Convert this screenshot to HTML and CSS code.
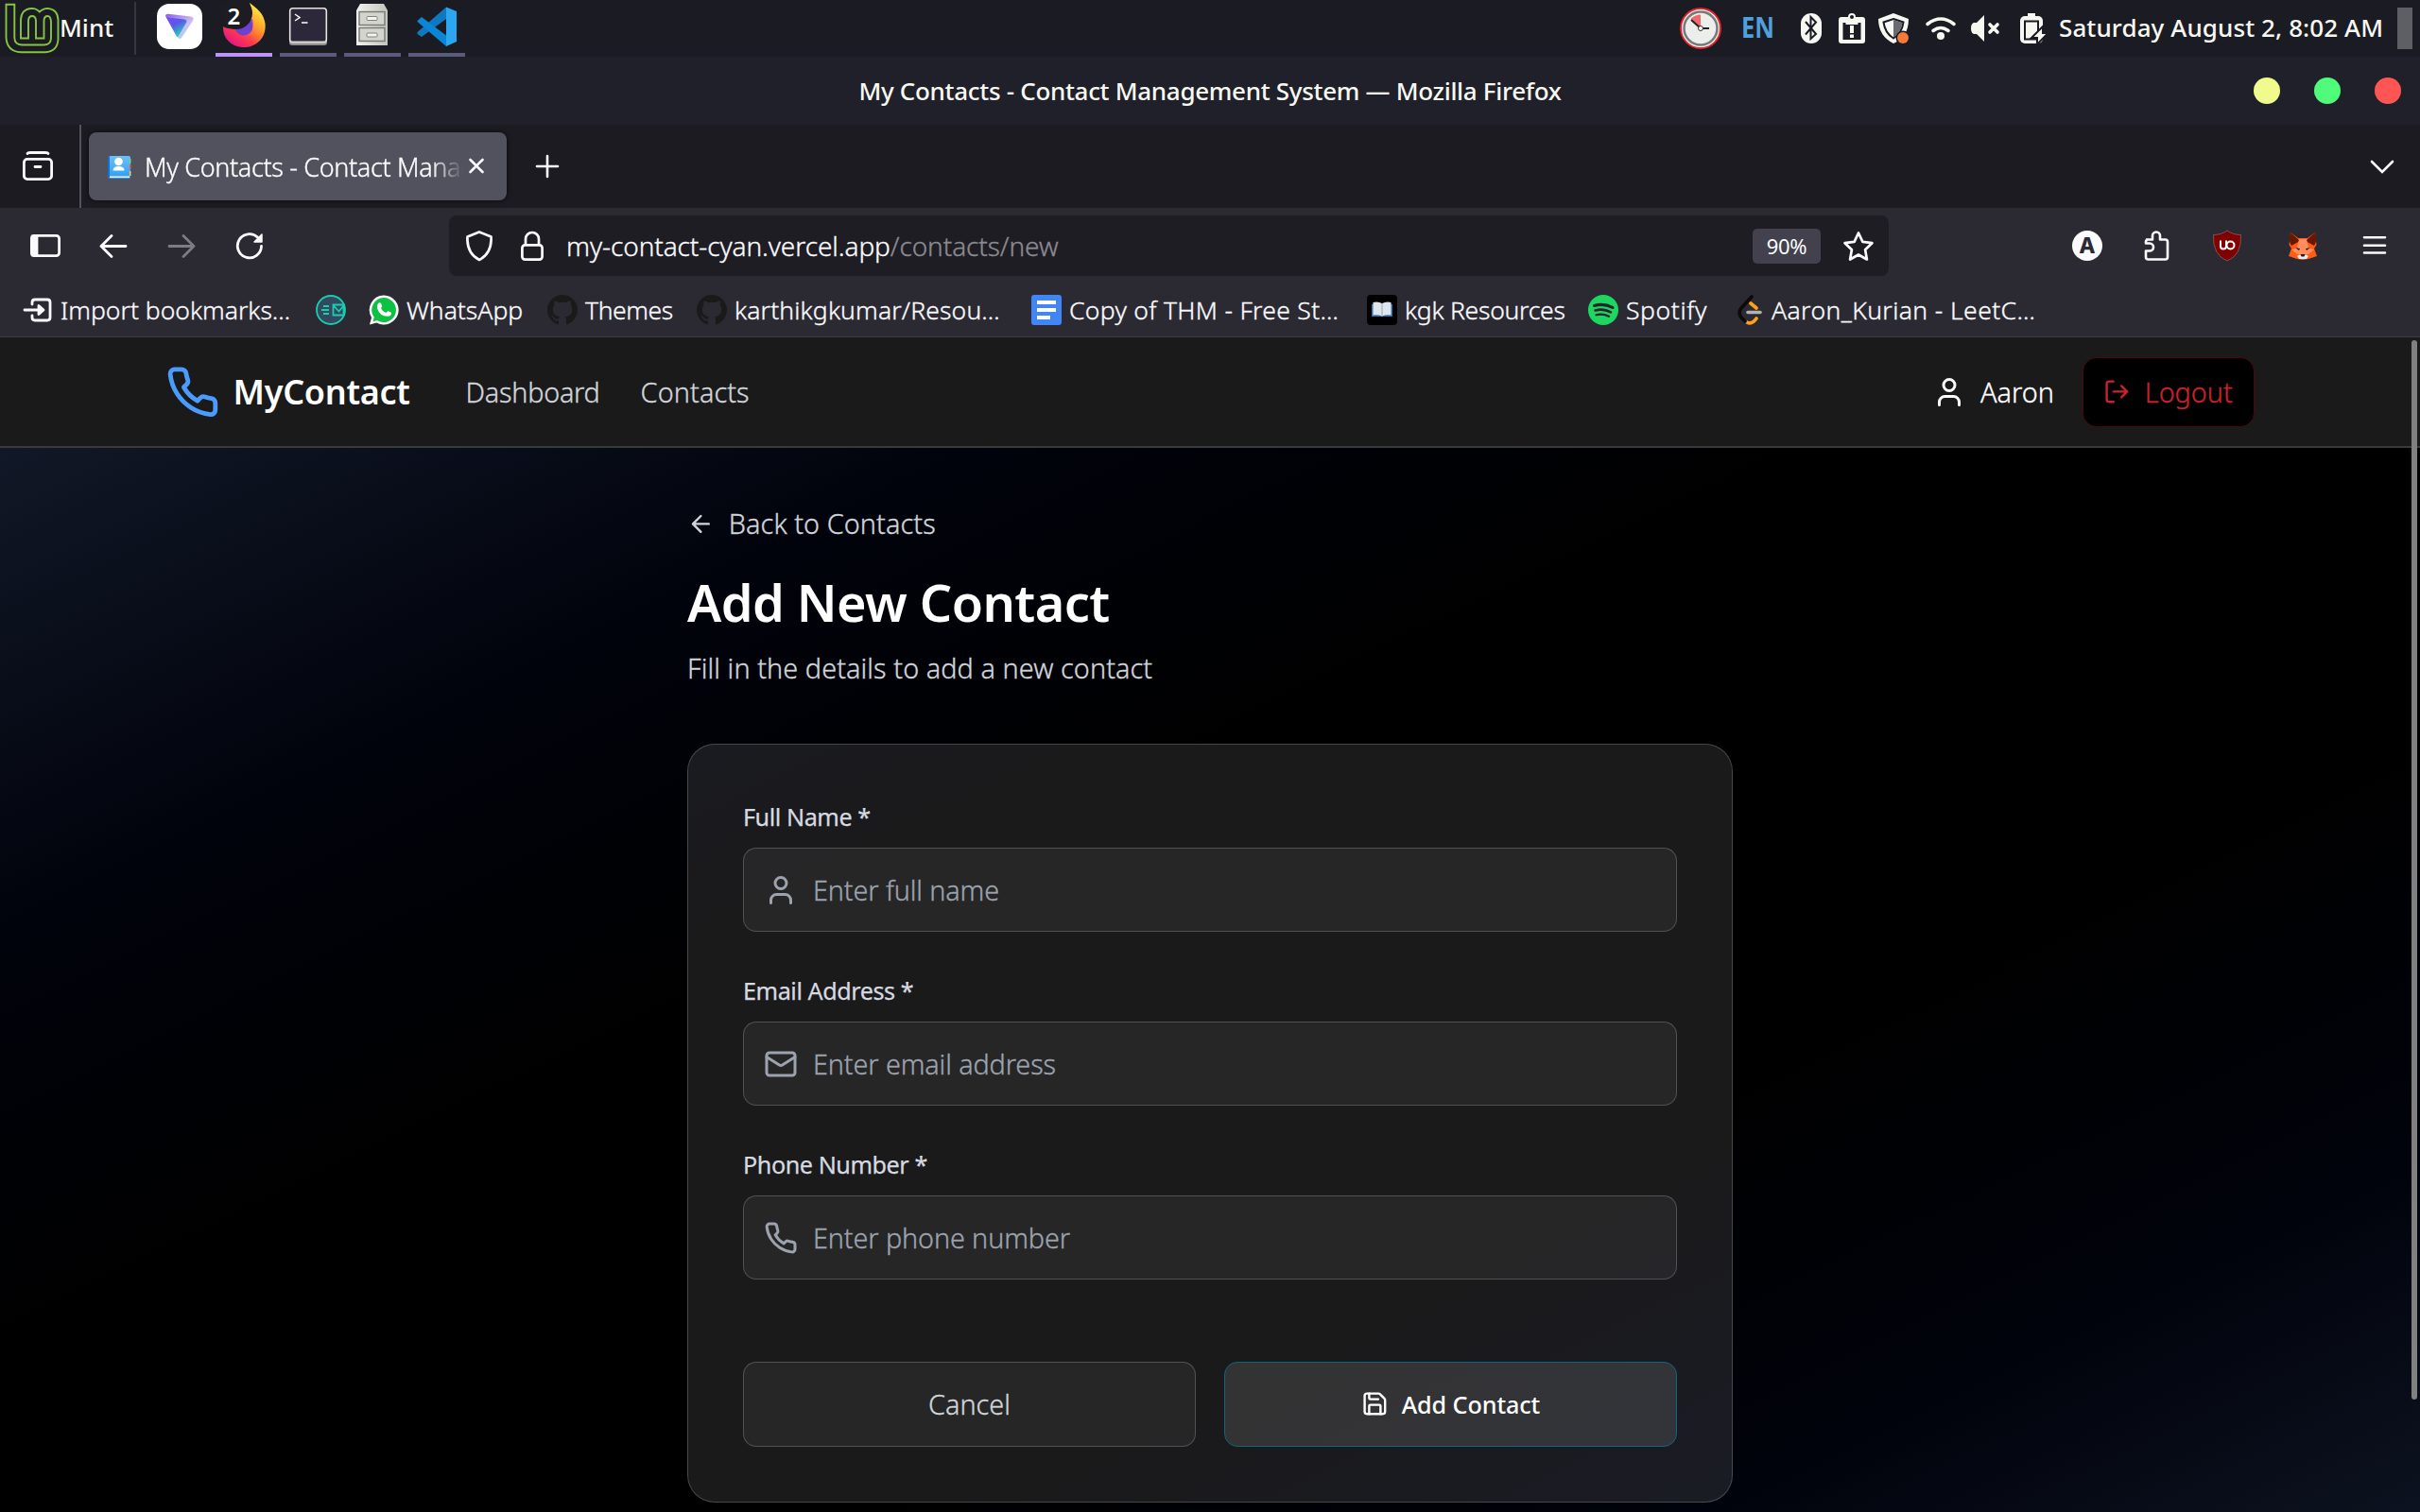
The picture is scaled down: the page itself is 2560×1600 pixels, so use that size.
FILE: index.html
```html
<!DOCTYPE html>
<html lang="en">
<head>
<meta charset="utf-8">
<title>My Contacts - Contact Management System</title>
<link rel="stylesheet" href="styles.css">
</head>
<body>
<svg width="0" height="0" class="defs">
  <defs>
    <linearGradient id="vpn" x1="0" y1="0" x2=".6" y2="1"><stop offset="0" stop-color="#7a4df5"/><stop offset=".5" stop-color="#5b55ea"/><stop offset="1" stop-color="#1fd6b4"/></linearGradient>
    <linearGradient id="vpn2" x1="0" y1="0" x2="1" y2="1"><stop offset="0" stop-color="#8c5cf0"/><stop offset=".6" stop-color="#cdbdf6"/><stop offset="1" stop-color="#7ee9dc"/></linearGradient>
    <linearGradient id="fox" x1=".85" y1=".05" x2=".2" y2=".95"><stop offset="0" stop-color="#fff044"/><stop offset=".4" stop-color="#ff9a2b"/><stop offset=".7" stop-color="#ff3b49"/><stop offset="1" stop-color="#e31587"/></linearGradient>
    <linearGradient id="metal" x1="0" y1="0" x2="1" y2="0"><stop offset="0" stop-color="#f2f2ee"/><stop offset="1" stop-color="#c3c4bd"/></linearGradient>
    <linearGradient id="book" x1="0" y1="0" x2="0" y2="1"><stop offset="0" stop-color="#6cc0f8"/><stop offset="1" stop-color="#2e9df2"/></linearGradient>
    <symbol id="i-phone" viewBox="0 0 24 24"><path d="M22 16.92v3a2 2 0 0 1-2.18 2 19.79 19.79 0 0 1-8.63-3.07 19.5 19.5 0 0 1-6-6 19.79 19.79 0 0 1-3.07-8.67A2 2 0 0 1 4.11 2h3a2 2 0 0 1 2 1.72 12.84 12.84 0 0 0 .7 2.81 2 2 0 0 1-.45 2.11L8.09 9.91a16 16 0 0 0 6 6l1.27-1.27a2 2 0 0 1 2.11-.45 12.84 12.84 0 0 0 2.81.7A2 2 0 0 1 22 16.92z"/></symbol>
    <symbol id="i-user" viewBox="0 0 24 24"><path d="M19 21v-2a4 4 0 0 0-4-4H9a4 4 0 0 0-4 4v2"/><circle cx="12" cy="7" r="4"/></symbol>
    <symbol id="i-mail" viewBox="0 0 24 24"><rect x="2" y="4" width="20" height="16" rx="2"/><path d="m22 7-8.97 5.7a1.94 1.94 0 0 1-2.06 0L2 7"/></symbol>
    <symbol id="i-logout" viewBox="0 0 24 24"><path d="M9 21H5a2 2 0 0 1-2-2V5a2 2 0 0 1 2-2h4M16 17l5-5-5-5M21 12H9"/></symbol>
    <symbol id="i-back" viewBox="0 0 24 24"><path d="m12 19-7-7 7-7M19 12H5"/></symbol>
    <symbol id="i-save" viewBox="0 0 24 24"><path d="M15.2 3a2 2 0 0 1 1.4.6l3.8 3.8a2 2 0 0 1 .6 1.4V19a2 2 0 0 1-2 2H5a2 2 0 0 1-2-2V5a2 2 0 0 1 2-2z"/><path d="M17 21v-7a1 1 0 0 0-1-1H8a1 1 0 0 0-1 1v7M7 3v4a1 1 0 0 0 1 1h7"/></symbol>
    <symbol id="i-github" viewBox="0 0 16 16"><path d="M8 0C3.58 0 0 3.58 0 8c0 3.54 2.29 6.53 5.47 7.59.4.07.55-.17.55-.38 0-.19-.01-.82-.01-1.49-2.01.37-2.53-.49-2.69-.94-.09-.23-.48-.94-.82-1.13-.28-.15-.68-.52-.01-.53.63-.01 1.08.58 1.23.82.72 1.21 1.87.87 2.33.66.07-.52.28-.87.51-1.07-1.78-.2-3.64-.89-3.64-3.95 0-.87.31-1.59.82-2.15-.08-.2-.36-1.02.08-2.12 0 0 .67-.21 2.2.82.64-.18 1.32-.27 2-.27s1.36.09 2 .27c1.53-1.04 2.2-.82 2.2-.82.44 1.1.16 1.92.08 2.12.51.56.82 1.27.82 2.15 0 3.07-1.87 3.75-3.65 3.95.29.25.54.73.54 1.48 0 1.07-.01 1.93-.01 2.2 0 .21.15.46.55.38A8.01 8.01 0 0 0 16 8c0-4.42-3.58-8-8-8z" fill="#1b1a1a"/></symbol>
  </defs>
</svg>

<div class="panel">
  <svg class="mint" viewBox="4 2 60 56" width="60" height="56" fill="none" stroke="#87c540" stroke-width="1.9"><path d="M6.5 4.8H15.3V40Q15.6 47.3 23 47.5H47Q53.8 47.3 54 40V23Q53.600 17 50.500 17Q46.600 17 46.500 22V40.500H38V22Q37.700 17 34 17Q30.200 17 30 22V40.500H22V21Q22.500 9.500 33.500 8.900Q38.500 9 41.800 12.500Q45.500 9 50.500 8.900Q61 9.800 61.500 21V42Q60.500 54.500 48 55.300H22Q7.500 54.500 6.500 40Z"/></svg>
  <span class="menu-name">Mint</span>
  <i class="panel-sep"></i>
  <div class="task vpn"><svg viewBox="166 4 48 48" width="48" height="48"><rect x="166" y="4" width="48" height="48" rx="13" fill="#fff"/><path d="M175 17Q175 14.500 178 14.700L202 17.500Q206 18.200 204 22L192 40Q190 42.500 187.500 39Z" fill="url(#vpn2)"/><path d="M175 16.500Q175.500 18 178 18.500L195 20.500Q198.500 21.200 197 24L188.500 38.500Q187.500 40 186 37Z" fill="url(#vpn)"/></svg></div>
  <div class="task active"><svg viewBox="230 0 56 56" width="56" height="56"><path d="M264 3C272 9 279 14 280.500 25C282 40 271 50 258 50C245 50 235.500 41 236 28C240 31 246 30 250 31Q258 28 262 20Q268 14 264 3Z" fill="url(#fox)"/><circle cx="258" cy="28" r="9.500" fill="#7a3fd0"/><path d="M250 20Q258 24 267 20Q270 33 258 37Q250 37 248 28Z" fill="#6a42cf" opacity=".8"/><circle cx="250" cy="14" r="17" fill="#1c1c22"/><text x="240.500" y="26" class="badge">2</text></svg></div>
  <div class="task"><svg viewBox="298 0 56 56" width="56" height="56"><rect x="306" y="10" width="40" height="38" rx="3" fill="#8f8f8c"/><rect x="306.700" y="8.700" width="38.600" height="36" rx="3" fill="#2d2839" stroke="#e4e4e0" stroke-width="1.600"/><path d="M307 43.500H345V45.500H307z" fill="#d0d0cc"/><path d="m312 15 5 3.500-5 3.500M319 24h6.500" fill="none" stroke="#fff" stroke-width="1.500"/></svg></div>
  <div class="task"><svg viewBox="366 0 56 56" width="56" height="56"><path d="M381 4H406L410 11V48H377V11Z" fill="url(#metal)"/><rect x="380" y="12.500" width="27" height="14" fill="#d3d4ce" stroke="#777973" stroke-width="1.400"/><rect x="380" y="29.500" width="27" height="14" fill="#d3d4ce" stroke="#777973" stroke-width="1.400"/><rect x="388" y="17.500" width="11" height="4" rx="1" fill="#f4f4f0" stroke="#80827c"/><rect x="388" y="35" width="11" height="4" rx="1" fill="#f4f4f0" stroke="#80827c"/></svg></div>
  <div class="task"><svg viewBox="434 0 56 56" width="56" height="56"><path d="M472 7.500 483 12V44L472 49Z" fill="#2aa7f0"/><path d="M472 7.500V20L446 39 441.500 36V34Z" fill="#0f78c0"/><path d="M441.500 22 446 18 472 37.500V49L441.500 23Z" fill="#0b86d6"/></svg></div>
  <div class="tray">
    <svg viewBox="1775 0 394 60" width="394" height="60">
      <circle cx="1799" cy="30" r="21" fill="#f4f4f2" stroke="#e3242b" stroke-width="2"/><circle cx="1799" cy="30" r="17.500" fill="#eceeec" stroke="#77797a" stroke-width="2.500"/><path d="M1799 30V15.500A14.500 14.500 0 0 0 1788.500 20Z" fill="#f2686c"/><path d="m1799 30-10-9M1799 30h9" stroke="#222" stroke-width="2"/><circle cx="1799" cy="30" r="2.500" fill="#fff" stroke="#333"/>
      <text x="1842" y="40" class="lang" textLength="35" lengthAdjust="spacingAndGlyphs">EN</text>
      <rect x="1905" y="14" width="22" height="32" rx="11" fill="#f8f8f2"/><path d="m1910 23 11 13-5.500 5V18l5.500 5.500-11 13" fill="none" stroke="#1b1b24" stroke-width="2"/>
      <g fill="#f8f8f2"><path fill-rule="evenodd" d="M1948 18h7a4 4 0 0 1 8 0h7q3 0 3 3v22q0 3-3 3h-22q-3 0-3-3v-22q0-3 3-3zM1949.500 24v18h19v-18h-3v2h-13v-2z"/><path d="M1957 27h4v8h-4zM1957 36.500h4v3.500h-4z"/></g>
      <circle cx="1959" cy="18" r="2" fill="#1b1b24"/>
      <path d="M2003 14 2019 20Q2019 39 2003 46Q1987 38 1987 20Z" fill="#f8f8f2"/><path d="M2003 20 2013.500 23.500Q2012 35 2003 40.500Q1994 35 1992.500 23.500Z" fill="none" stroke="#1b1b24" stroke-width="2"/><path d="M2003 21 2012.500 24.300Q2011 34 2003 39.500Z" fill="#6a6b70"/><circle cx="2013" cy="40" r="7.500" fill="#1b1b24"/><circle cx="2013" cy="40" r="6" fill="#f5793a"/>
      <g fill="none" stroke="#f8f8f2" stroke-width="3.600" stroke-linecap="round"><path d="M2039 25.500Q2053 14.500 2067 25.500M2045 32.500Q2053 26.500 2061 32.500"/></g><circle cx="2053" cy="38" r="4" fill="#f8f8f2"/>
      <path d="M2099 16v28l-8-8h-3q-3-1-3-6t3-6h3z" fill="#f8f8f2"/><path d="m2105 26 8 8m0-8-8 8" stroke="#f8f8f2" stroke-width="3.600" stroke-linecap="round"/>
      <path d="M2145 20v-6h8v6" fill="#f8f8f2"/><rect x="2137" y="17" width="24" height="29" rx="5" fill="#f8f8f2"/><rect x="2142" y="22.500" width="14" height="19" fill="#f8f8f2" stroke="#1b1b24" stroke-width="2"/><path d="M2161 28v7h5.500l-11.500 12v-7h-6z" fill="#f8f8f2" stroke="#1b1b24" stroke-width="2"/>
    </svg>
    <span class="clock">Saturday August 2, 8:02 AM</span>
    <i class="show-desktop"></i>
  </div>
</div>

<div class="titlebar">
  <span></span>
  <span class="title">My Contacts - Contact Management System — Mozilla Firefox</span>
  <div class="dots"><i class="dot yellow"></i><i class="dot green"></i><i class="dot red"></i></div>
</div>

<div class="tabs">
  <svg class="view" viewBox="22 160 36 34" width="36" height="34" fill="none" stroke="#fbfbfe" stroke-width="2.800" stroke-linecap="round"><rect x="25.400" y="169.400" width="29.200" height="21.200" rx="3.500"/><path d="M29 163.500q.5-1 3-1h16q2.500 0 3 1M37 177.500h6"/></svg>
  <i class="tab-sep"></i>
  <div class="tab">
    <svg viewBox="114 163 25 25" width="25" height="25"><path d="M117 164h19q2 0 2 2v20q0 2-2 2h-19q-3 0-3-3v-18q0-3 3-3z" fill="url(#book)"/><path d="M114 166q0-2 2-2v22q0 2-2 0z" fill="#1470c8"/><path d="M116 185.500h21v1.500h-21z" fill="#e6f3ff"/><circle cx="125.500" cy="170" r="4.300" fill="#fff"/><path d="M119.500 179.500q0-4.500 6-4.500t6 4.500z" fill="#fff"/><path d="M137 167h1.500v5H137z" fill="#5fe06c"/><path d="M137 173h1.500v5H137z" fill="#ff4d5e"/><path d="M137 180h1.500v5H137z" fill="#ffc83d"/></svg>
    <span class="tab-title">My Contacts - Contact Manag</span>
    <svg viewBox="494 167 20 20" width="20" height="20"><path d="m497.500 170 13 13m0-13-13 13" stroke="#fbfbfe" stroke-width="2.600" stroke-linecap="round"/></svg>
  </div>
  <svg class="plus" viewBox="0 0 26 26" width="26" height="26"><path d="M13 2v22M2 13h22" stroke="#fbfbfe" stroke-width="2.600" stroke-linecap="round"/></svg>
  <svg class="chev" viewBox="2506 166 28 18" width="28" height="18"><path d="m2509 170 11 11 11-11" fill="none" stroke="#fbfbfe" stroke-width="2.600" stroke-linecap="round"/></svg>
</div>

<div class="toolbar">
  <svg viewBox="0 220 475 80" width="475" height="80" fill="none" stroke="#fbfbfe" stroke-width="2.800" stroke-linecap="round" stroke-linejoin="round"><rect x="33.400" y="249.400" width="29.200" height="21.200" rx="3"/><path d="M34 250h5v20h-5z" fill="#fbfbfe"/><path d="M107.500 260.500H133M118 249.500l-11 11 11 11"/><path d="M179 260.500h25.500M194 249.500l11 11-11 11" stroke="#7d7c84"/><path d="M276.500 260.500a12.600 12.600 0 1 1-4-9.500"/><path d="M277 248v8h-8z" fill="#fbfbfe" stroke-width="1.500"/></svg>
  <div class="urlbar">
    <svg viewBox="490 240 90 40" width="90" height="40" fill="none" stroke="#fbfbfe" stroke-width="2.700" stroke-linejoin="round"><path d="M507 245.500 519.500 250.500Q520.500 268 507 275Q493.500 268 494.500 250.500Z"/><rect x="552.400" y="259.400" width="21.200" height="15.200" rx="3"/><path d="M556 259v-6a7 7 0 0 1 14 0v6"/></svg>
    <span class="url">my-contact-cyan.vercel.app<span class="path">/contacts/new</span></span>
    <span class="zoom">90%</span>
    <svg viewBox="1948 242 36 36" width="36" height="36" fill="none" stroke="#fbfbfe" stroke-width="2.700" stroke-linejoin="round"><path d="m1966 246.500 4.400 9.300 10 1.400-7.300 7 1.800 10.300-8.900-5-8.900 5 1.800-10.300-7.300-7 10-1.400z"/></svg>
  </div>
  <svg class="ext" viewBox="2180 220 360 80" width="360" height="80">
    <circle cx="2208" cy="260" r="16" fill="#fbfbfe"/><text x="2208" y="268" text-anchor="middle" class="ext-a">A</text>
    <path d="M2270 253.500h7v-4a4 4 0 0 1 8 0v4h5.500q2.500 0 2.500 2.500v16q0 2.500-2.500 2.500h-18q-2.500 0-2.500-2.500v-6.500h4a4 4 0 0 0 0-8h-4v-1.500q0-2.500 2.500-2.500" fill="none" stroke="#fbfbfe" stroke-width="2.600" stroke-linejoin="round"/>
    <path d="M2356 244Q2362 248.500 2370.500 248.500Q2371.500 270 2356 276Q2340.500 270 2341.500 248.500Q2350 248.500 2356 244Z" fill="#800000" stroke="#8b6066" stroke-width=".8"/><path d="M2349 254.500v6a3 3 0 0 0 6 0v-6" fill="none" stroke="#fff" stroke-width="2"/><circle cx="2359.500" cy="259.500" r="4" fill="none" stroke="#fff" stroke-width="2"/>
    <path d="M2423 246 2431 252H2441L2449 246 2450.500 259 2448 263 2451 271 2442 274 2436 275 2430 274 2421 271 2424 263 2421.500 259Z" fill="#ff5c16"/><path d="M2423 246 2433 255 2424 260Q2420 255 2423 246ZM2449 246 2439 255 2448 260Q2452 255 2449 246Z" fill="#661800"/><path d="M2432 253h8l2 9 6 2-6 5-6 1-6-1-6-5 6-2z" fill="#ff8d5d"/><path d="M2428 262l5 1-1 2zM2444 262l-5 1 1 2z" fill="#3a1a10"/><path d="M2430 271q6-4 12 0l-2 3h-8z" fill="#e7ebf6"/><path d="M2433.500 269h5l-1 2.500h-3z" fill="#3c1200"/>
    <path d="M2501 251.300h22M2501 259.800h22M2501 267.500h22" stroke="#fbfbfe" stroke-width="2.600" stroke-linecap="round"/>
  </svg>
</div>

<div class="bookmarks">
  <svg viewBox="24 312 32 32" width="32" height="32" fill="none" stroke="#fbfbfe" stroke-width="2.800" stroke-linecap="round" stroke-linejoin="round"><path d="M34 322v-2q0-3 3-3h13q3 0 3 3v16q0 3-3 3H37q-3 0-3-3v-2M26 328h19"/><path d="m41 323.500 5 4.500-5 4.500z" fill="#fbfbfe"/></svg>
  <span class="bm bm-import">Import bookmarks…</span>
  <svg viewBox="334 312 32 32" width="32" height="32" fill="none" stroke="#17cfae" stroke-width="1.800"><circle cx="350" cy="328" r="15" fill="#34495e"/><path d="M342 324h6M340 328h8M342 332h6M352.500 322.500h11v11h-11zM353 323.500l5.500 6 5-6"/></svg>
  <span class="bm bm-mail"></span>
  <svg viewBox="390 312 32 32" width="32" height="32"><path d="M406 312.500a15.500 15.500 0 1 1-7.500 29l-7.500 2 2-7.500A15.500 15.500 0 0 1 406 312.500z" fill="#fff"/><path d="M406 315a13 13 0 1 1-7 24l-4.500 1.200 1.300-4.500A13 13 0 0 1 406 315z" fill="#0dc143"/><path d="M400 321q2-1.500 3 0l1.300 3-1.300 2q2 4 5.500 5l2-2 3.500 1.800q.5 3-3 4-9 .5-12-8.500-.5-3 1-5.300z" fill="#fff"/></svg>
  <span class="bm bm-wa">WhatsApp</span>
  <svg width="32" height="32"><use href="#i-github"/></svg>
  <span class="bm bm-th">Themes</span>
  <svg width="32" height="32"><use href="#i-github"/></svg>
  <span class="bm bm-gh">karthikgkumar/Resou…</span>
  <svg viewBox="0 0 32 32" width="32" height="32"><rect width="32" height="32" rx="3" fill="#4285f4"/><path d="M6 6h20v4H6zM6 14h20v4H6zM6 22h14v4H6z" fill="#fff"/></svg>
  <span class="bm bm-doc">Copy of THM - Free St…</span>
  <svg viewBox="0 0 32 32" width="32" height="32"><rect width="32" height="32" rx="4" fill="#000"/><path d="M5 10h22v13H5z" fill="#2b6fae"/><path d="M6.500 8q5-1.500 9.500 1 4.500-2.500 9.500-1v13.500q-5-1-9.500 1-4.500-2-9.500-1z" fill="#dfe7ee"/><path d="M16 9v13.500" stroke="#aebccb" stroke-width="1.500"/></svg>
  <span class="bm bm-kgk">kgk Resources</span>
  <svg viewBox="0 0 32 32" width="32" height="32"><circle cx="16" cy="16" r="16" fill="#1ed760"/><g fill="none" stroke="#24252c" stroke-linecap="round"><path d="M6.500 11.500q10-3 19.500 2" stroke-width="3"/><path d="M7.500 16.500q8.500-2.500 16.500 1.800" stroke-width="2.600"/><path d="M8.500 21.300q7-1.800 13.500 1.500" stroke-width="2.200"/></g></svg>
  <span class="bm bm-sp">Spotify</span>
  <svg viewBox="0 0 28 32" width="28" height="32" fill="none" stroke-width="3.600" stroke-linecap="round"><path d="M14 9l6 5M20 25q-5 7-10 4" stroke="#ffa116"/><path d="M15 2 4 14q-4 5 0 10l4 4" stroke="#0b0b0b"/><path d="M11 18.500h13" stroke="#b3b3b3"/></svg>
  <span class="bm bm-lc">Aaron_Kurian - LeetC…</span>
</div>

<div class="viewport">
  <header class="nav">
    <svg class="stroke brand-icon"><use href="#i-phone"/></svg>
    <span class="brand">MyContact</span>
    <a class="link dash">Dashboard</a>
    <a class="link">Contacts</a>
    <div class="account">
      <svg class="stroke user-icon"><use href="#i-user"/></svg>
      <span class="user">Aaron</span>
      <button class="logout"><svg class="stroke ic16"><use href="#i-logout"/></svg><span>Logout</span></button>
    </div>
  </header>
  <main class="page">
    <div class="content">
      <a class="back"><svg class="stroke ic16"><use href="#i-back"/></svg><span>Back to Contacts</span></a>
      <h1>Add New Contact</h1>
      <p class="sub">Fill in the details to add a new contact</p>
      <form class="card">
        <label>Full Name *</label>
        <div class="input"><svg class="stroke ic20"><use href="#i-user"/></svg><span>Enter full name</span></div>
        <label>Email Address *</label>
        <div class="input"><svg class="stroke ic20"><use href="#i-mail"/></svg><span>Enter email address</span></div>
        <label>Phone Number *</label>
        <div class="input"><svg class="stroke ic20"><use href="#i-phone"/></svg><span>Enter phone number</span></div>
        <div class="actions">
          <div class="btn">Cancel</div>
          <div class="btn primary"><svg class="stroke ic16"><use href="#i-save"/></svg><span>Add Contact</span></div>
        </div>
      </form>
    </div>
  </main>
  <i class="scrollbar"></i>
</div>
</body>
</html>
```
FILE: styles.css
```css
* { box-sizing: border-box; }
body { margin: 0; width: 2560px; height: 1600px; overflow: hidden; background: #000; color: #fbfbfe; font-family: "Noto Sans", "Open Sans", sans-serif; font-size: 26px; white-space: nowrap; }
svg { display: block; flex: none; }
i { display: block; flex: none; }
.defs { position: absolute; }

/* desktop panel */
.panel { height: 60px; background: #1b1b24; display: flex; align-items: center; padding-left: 4px; color: #f8f8f2; }
.menu-name { width: 79px; margin-left: -1px; padding-bottom: 2px; font-weight: 500; }
.panel-sep { width: 2px; height: 56px; background: #363641; margin-right: 16px; }
.task { width: 60px; height: 60px; margin-right: 8px; border-bottom: 4px solid #5a5b7c; display: flex; justify-content: center; }
.task.vpn { border-color: transparent; align-items: center; }
.task.active { border-color: #bd93f9; }
.badge { font-size: 24px; font-weight: 600; fill: #fff; }
.tray { margin-left: auto; display: flex; align-items: center; height: 60px; }
.lang { font-size: 31px; font-weight: 700; fill: #4fa0dc; }
.clock { width: 367px; padding: 0 0 2px 9px; font-weight: 500; letter-spacing: .1px; }
.show-desktop { width: 16px; height: 44px; margin-right: 8px; background: #5e5f65; }

.titlebar { height: 72px; background: #1f202a; display: grid; grid-template-columns: 1fr auto 1fr; align-items: center; }
.title { font-weight: 500; letter-spacing: -.31px; color: #f8f8f2; padding-bottom: 1px; }
.dots { display: flex; justify-content: flex-end; gap: 36px; padding-right: 20px; }
.dot { width: 28px; height: 28px; border-radius: 50%; }
.yellow { background: #f1fa8c; }
.green { background: #50fa7b; }
.red { background: #ff5555; }

/* browser chrome */
.tab, .url, .bookmarks, .link, .user, .logout, .back, .sub, .input, .btn { -webkit-text-stroke: .35px currentColor; }
.tab svg, .bookmarks svg { -webkit-text-stroke: 0; }
.tabs { height: 88px; background: #1c1b22; display: flex; align-items: center; padding-left: 22px; }
.tab-sep { width: 2px; height: 88px; background: #52525e; margin: 0 8px 0 26px; }
.tab { width: 442px; height: 72px; border-radius: 8px; background: #52525e; box-shadow: 0 0 5px rgba(0,0,0,.7); display: flex; align-items: center; padding-left: 20px; font-size: 27px; font-weight: 300; }
.tab-title { width: 337px; margin: 0 4px 0 14px; letter-spacing: -.35px; -webkit-mask-image: linear-gradient(90deg, #000 90%, transparent 100%); mask-image: linear-gradient(90deg, #000 90%, transparent 100%); }
.plus { margin-left: 30px; }
.chev { margin: 0 26px 0 auto; }
.toolbar { height: 80px; background: #2b2a33; display: flex; align-items: center; }
.urlbar { width: 1523px; height: 64px; border-radius: 8px; background: #1e1d24; display: flex; align-items: center; padding: 0 14px 0 15px; }
.url { margin-left: 19px; font-size: 28px; font-weight: 300; letter-spacing: -.08px; }
.path { color: #8b8a91; }
.zoom { width: 72px; height: 37px; margin: 0 22px 0 auto; border-radius: 5px; background: #42414d; font-size: 22px; line-height: 36px; text-align: center; letter-spacing: -.3px; }
.ext { margin-left: auto; margin-right: 20px; }
.ext-a { font-size: 23px; font-weight: 800; fill: #2b2a33; }
.bookmarks { height: 57px; background: #2b2a33; display: flex; align-items: center; padding-left: 24px; border-bottom: 1px solid #3c3b45; font-size: 26.5px; font-weight: 300; padding-bottom: 1px; }
.bm { padding-left: 8px; }
.bm-import { width: 278px; letter-spacing: 0; }
.bm-mail { width: 24px; padding: 0; }
.bm-wa { width: 157px; letter-spacing: 0; }
.bm-th { width: 126px; letter-spacing: -.4px; }
.bm-gh { width: 322px; letter-spacing: .15px; }
.bm-doc { width: 323px; letter-spacing: .3px; }
.bm-kgk { width: 202px; letter-spacing: -.25px; }
.bm-sp { width: 126px; letter-spacing: .6px; }
.bm-lc { letter-spacing: .4px; }

/* web page */
.viewport { position: relative; height: 1243px; }
.stroke { fill: none; stroke: currentColor; stroke-width: 2; stroke-linecap: round; stroke-linejoin: round; }
.nav { height: 117px; background: #1a1a1a; border-bottom: 2px solid #3a3a3a; display: flex; align-items: center; padding: 0 175px; font-size: 28.8px; font-weight: 300; }
.brand-icon { width: 57.6px; height: 57.6px; color: #4b9bff; }
.brand { margin-left: 14px; width: 246px; font-size: 36px; font-weight: 600; letter-spacing: -.3px; color: #fff; }
.link { color: #d1d5db; letter-spacing: -.25px; }
.dash { width: 185px; }
.dash + .link { letter-spacing: .1px; }
.account { margin-left: auto; display: flex; align-items: center; }
.user-icon { width: 36px; height: 36px; }
.user { width: 108px; margin-left: 15px; color: #fff; }
.logout { width: 182px; height: 74px; display: flex; align-items: center; gap: 15px; padding: 0 0 0 21px; border: 1.500px solid #4a070c; border-radius: 15px; background: #000; color: #cb222b; font: inherit; }
.ic16 { width: 28.8px; height: 28.8px; }
.ic20 { width: 36px; height: 36px; }
.page { height: 1126px; background: linear-gradient(to bottom right, #111827 0%, #01030c 20%, #000 38%, #000 62%, #01030c 80%, #111827 100%) 0 0 / 100% 1263px no-repeat; display: flex; justify-content: center; padding-top: 58px; }
.content { width: 1106px; }
.back { display: flex; align-items: center; gap: 15px; height: 45px; color: #d1d5db; font-size: 28.8px; font-weight: 300; letter-spacing: .08px; }
.back span { padding-bottom: 2px; }
h1 { margin: 28px 0 0; height: 65px; line-height: 65px; font-size: 54px; font-weight: 600; letter-spacing: -.55px; color: #fff; }
.sub { margin: 15px 0 0; height: 43px; line-height: 43px; font-size: 28.8px; font-weight: 300; color: #d1d5db; letter-spacing: .08px; }
.card { width: 1106px; height: 803px; margin: 59px 0 0; padding: 57px 58px; border: 1.500px solid rgba(255,255,255,.2); border-radius: 29px; background: rgba(255,255,255,.1); }
label { display: block; height: 52px; line-height: 38px; font-size: 25.2px; letter-spacing: -.45px; color: #d6dae0; -webkit-text-stroke: .25px currentColor; }
.input { height: 89px; margin-bottom: 43px; padding-left: 21px; display: flex; align-items: center; gap: 16px; border: 1.500px solid rgba(255,255,255,.2); border-radius: 14px; background: rgba(255,255,255,.055); color: #9ca3af; font-size: 28.8px; font-weight: 300; letter-spacing: -.12px; }
.input span { padding-bottom: 1px; }
.actions { display: grid; grid-template-columns: 1fr 1fr; gap: 30px; margin-top: 87px; }
.btn { height: 90px; display: flex; align-items: center; justify-content: center; gap: 14px; border: 1.500px solid rgba(255,255,255,.2); border-radius: 14px; background: rgba(255,255,255,.055); color: #d1d5db; font-size: 28.8px; font-weight: 300; padding-bottom: 1px; }
.primary { border-color: #0d6580; background: rgba(255,255,255,.11); color: #fff; font-size: 25.2px; font-weight: 500; letter-spacing: -.1px; -webkit-text-stroke: 0; }
.scrollbar { position: absolute; left: 2551px; top: 3px; width: 6px; height: 1121px; border-radius: 3px; background: #808080; }
```
